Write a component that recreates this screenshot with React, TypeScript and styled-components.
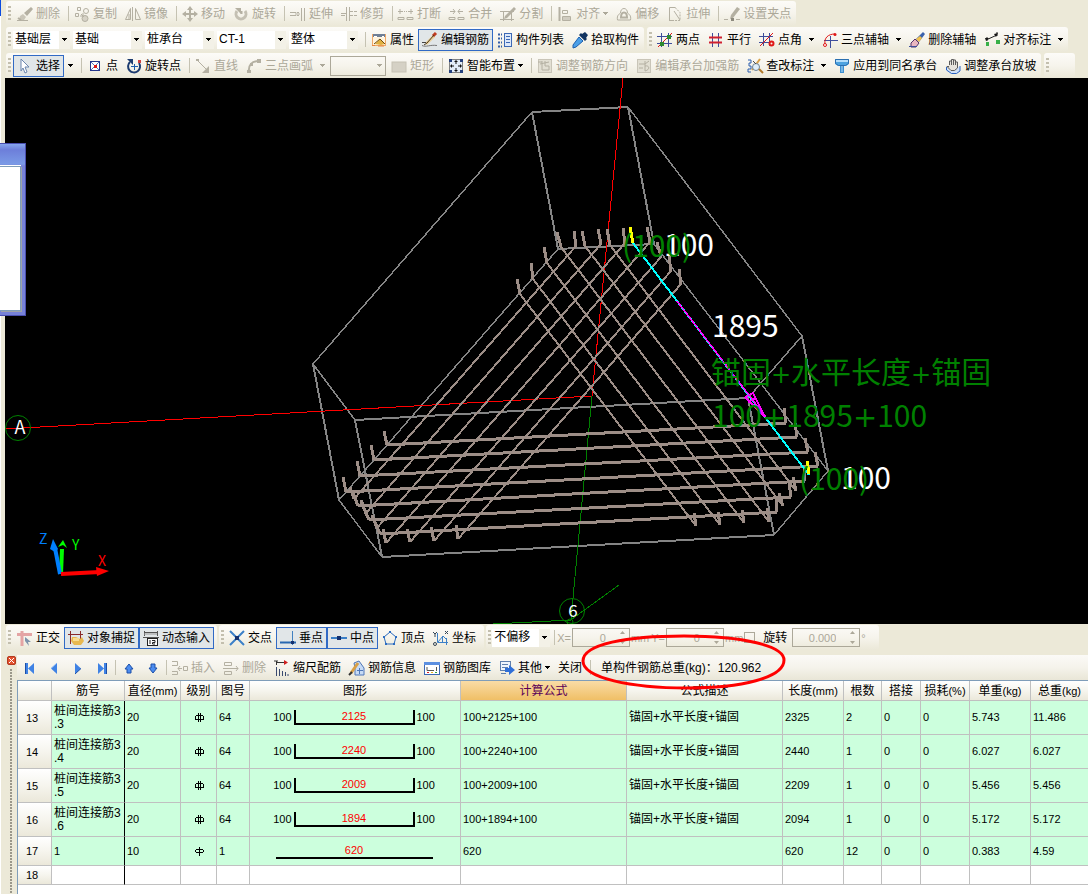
import React from 'react';
import styled, { createGlobalStyle, css } from 'styled-components';

const SANS = '"Liberation Sans", "Noto Sans CJK SC", sans-serif';
const CAD = '"Noto Sans CJK SC", "Noto Sans", sans-serif';
const G = '#b4b0a2';
const BLUE = '#1c4fa8';

const Global = createGlobalStyle`
  *, *::before, *::after { box-sizing: border-box; }
  body { margin: 0; background: #ece9d8; font-family: ${SANS}; font-size: 12px; line-height: 16px; color: #000; }
  button, input, select { font: inherit; color: inherit; margin: 0; }
`;

const Page = styled.div`
  position: relative;
  display: flex;
  flex-direction: column;
  min-height: 100vh;
  overflow: hidden;
  padding-left: 1px;
  background: linear-gradient(90deg, #fff 1px, #ece9d8 0);
`;

const Bars = styled.header`
  display: flex;
  flex-direction: column;
  gap: 1px;
  padding: 1px 0 0 5px;
`;

const BarRow = styled.div`
  display: flex;
  gap: 3px;
  white-space: nowrap;
`;

const Strip = styled.div<{ $tail?: number }>`
  display: flex;
  align-items: center;
  flex: none;
  height: 25px;
  padding: 0 ${p => p.$tail ?? 1}px 0 2px;
  border-radius: 3px;
  background: linear-gradient(#fcfbf8, #f6f4ec 50%, #ebe8d8);
`;

const Grip = styled.span<{ $gap?: number }>`
  flex: none;
  width: 3px;
  height: 15px;
  margin-right: ${p => p.$gap ?? 1}px;
  background: repeating-linear-gradient(#c3bfae 0 2px, transparent 2px 4px);
`;

const Sep = styled.span<{ $tight?: boolean }>`
  flex: none;
  width: 1px;
  height: 15px;
  margin: 0 1px 0 ${p => (p.$tight ? 1 : 4)}px;
  background: #c5c2b2;
`;

const ToolButton = styled.button<{ $on?: boolean }>`
  display: flex;
  align-items: center;
  flex: none;
  gap: 3px;
  height: 22px;
  padding: 0 3px;
  border: 1px solid transparent;
  background: transparent;
  white-space: nowrap;
  ${p => p.$on && css`
    border-color: #316ac5;
    background: #e1e6e8;
  `}
  &:disabled { color: #aca899; }
`;

const Glyph = styled.svg`
  display: block;
  flex: none;
  overflow: visible;
`;

const ArrowSvg = styled.svg<{ $split?: boolean }>`
  display: block;
  flex: none;
  margin-left: ${p => (p.$split ? 4 : 0)}px;
`;

const ArrowButton = styled.button`
  display: flex;
  align-items: center;
  flex: none;
  width: 13px;
  height: 22px;
  padding: 0 4px;
  border: 0;
  background: transparent;
`;

const ComboBox = styled.span<{ $w: number; $off?: boolean }>`
  display: grid;
  flex: none;
  align-items: center;
  width: ${p => p.$w}px;
  height: 18px;
  margin: 0 3px 0 0;
  background: ${p => (p.$off ? 'transparent' : 'linear-gradient(90deg, #fff calc(100% - 11px), #f3f1e7 0)')};
  ${p => p.$off && css`
    height: 20px;
    margin: 0 1px;
    border: 1px solid #aca899;
  `}
`;

const Select = styled.select`
  grid-area: 1 / 1;
  width: 100%;
  height: 100%;
  padding: 0 12px 2px 2px;
  border: 0;
  border-radius: 0;
  background: transparent;
  appearance: none;
  opacity: 1;
`;

const ComboArrow = styled.span`
  grid-area: 1 / 1;
  justify-self: end;
  padding-right: 3px;
  pointer-events: none;
`;

const SpinBox = styled.span<{ $w: number }>`
  display: flex;
  align-items: center;
  flex: none;
  width: ${p => p.$w}px;
  height: 19px;
  padding-right: 4px;
  border: 1px solid #aca899;
`;

const SpinInput = styled.input`
  flex: 1;
  width: 20px;
  height: 16px;
  padding: 0 14px 0 0;
  border: 0;
  background: transparent;
  color: #aca899;
  font-size: 11px;
  text-align: right;
`;

const Muted = styled.label`
  flex: none;
  padding: 0 1px;
  color: #aca899;
  font-size: 11px;
`;

const TickLabel = styled.label`
  display: flex;
  align-items: center;
  gap: 8px;
  padding-right: 5px;
`;

const Tick = styled.input`
  width: 11px;
  height: 11px;
  border: 1px solid #aca899;
  appearance: none;
`;

const CanvasArea = styled.main`
  height: 546px;
  margin-left: 4px;
  background: #000;
`;

const Scene = styled.svg`
  display: block;
  width: 100%;
  height: 100%;
`;

const FloatingWindow = styled.aside`
  position: absolute;
  left: 0;
  top: 143px;
  width: 26px;
  height: 173px;
  padding: 22px 4px 4px 0;
  border: 1px solid #4a4fb0;
  border-left: 0;
  background: linear-gradient(#86a6ee, #6d7fda 6px, #7a9ae6 20px, #7782d8 22px);
`;

const WindowBody = styled.div`
  height: 100%;
  border: 1px solid #7f9db9;
  border-left: 0;
  background: #fff;
  box-shadow: 1px 1px 0 #9fa3a8, 0 -1px 0 #fff;
`;

const LeftMark = styled.span`
  position: absolute;
  left: 0;
  top: 0;
  width: 1px;
  height: 16px;
  background: #0a4be0;
`;

const Lower = styled.section`
  position: relative;
  display: flex;
  flex: 1;
  flex-direction: column;
`;

const SnapRow = styled(BarRow)`
  gap: 2px;
  padding: 1px 0 5px 5px;
`;

const Panel = styled.div`
  display: flex;
  flex: 1;
`;

const Gutter = styled.div`
  display: flex;
  flex: none;
  flex-direction: column;
  align-items: center;
  gap: 4px;
  width: 16px;
`;

const CloseButton = styled.button`
  display: flex;
  align-self: flex-end;
  justify-content: center;
  align-items: center;
  width: 9px;
  height: 9px;
  margin: 1px 1px 0 0;
  padding: 0;
  border: 1px solid #b33a20;
  border-radius: 2px;
  background: #e2512f;
`;

const Dots = styled.span`
  flex: 1;
  width: 2px;
  margin-left: 4px;
  background: repeating-linear-gradient(#9a978a 0 2px, transparent 2px 3px);
`;

const PanelMain = styled.div`
  display: flex;
  flex: 1;
  flex-direction: column;
  min-width: 0;
`;

const PanelBar = styled.div`
  display: flex;
  align-items: center;
  height: 25px;
  padding-left: 1px;
  background: linear-gradient(#fbfaf7, #f5f3eb 50%, #e9e6d7);
  white-space: nowrap;
`;

const Total = styled.output`
  padding-left: 9px;
`;

const TableWrap = styled.div`
  flex: 1;
  border: solid #7f9db9;
  border-width: 1px 0 0 1px;
  background: #fff;
`;

const Table = styled.table`
  width: 100%;
  table-layout: fixed;
  border-collapse: separate;
  border-spacing: 0;
`;

const Row = styled.tr<{ $h: number }>`
  height: ${p => p.$h}px;
`;

const Head = styled.th<{ $active?: boolean }>`
  padding: 0;
  border: solid #c0c0c0;
  border-width: 0 1px 1px 0;
  background: ${p => (p.$active ? 'linear-gradient(#f9dca6, #f0bf66)' : 'linear-gradient(#fff, #f6f5ee 50%, #ebe8da)')};
  color: ${p => (p.$active ? '#5a0058' : '#000')};
  font-weight: normal;
  white-space: nowrap;
  &:last-child { border-right: 0; }
`;

const RowHead = styled(Head)`
  padding-right: 5px;
  font-size: 11px;
`;

const Unit = styled.span`
  font-size: 11px;
`;

const Cell = styled.td<{ $fill?: boolean; $text?: boolean; $dark?: boolean }>`
  padding: 0 0 0 2px;
  border: solid #c0c0c0;
  border-width: 0 1px 1px 0;
  ${p => p.$dark && css`border-right-color: #000;`}
  background: ${p => (p.$fill ? '#ccffdd' : '#fff')};
  font-size: ${p => (p.$text ? 12 : 11)}px;
  line-height: 13px;
  white-space: nowrap;
  &:last-child { border-right: 0; }
`;

const Shape = styled.div`
  display: flex;
  justify-content: center;
  align-items: center;
  gap: 2px;
  padding-right: 4px;
`;

const Hooked = styled.span`
  width: 121px;
  height: 15px;
  border: solid #000;
  border-width: 0 2px 2px 2px;
  color: #f00;
  text-align: center;
`;

const Straight = styled(Hooked)`
  width: 157px;
  border-width: 0 0 2px 0;
`;

const Mark = styled.svg`
  display: block;
  margin: 0 auto;
`;

const RedRing = styled.svg`
  position: absolute;
  left: 578px;
  top: 8px;
  pointer-events: none;
`;

const S = (d: string, c = G, w = 1) => <path d={d} stroke={c} strokeWidth={w} fill="none" />;
const F = (d: string, c = G) => <path d={d} fill={c} />;

const icons: Record<string, React.ReactNode> = {
  erase: <>{F('M14 1l2 2-6 7-3-3z')}{F('M6 8l3 3-2 3-5 0 1-4z', '#c9c5b8')}{S('M0 14.500h11')}{S('M1 12l3 2', G, 2)}</>,
  copy: <>{S('M3.500 1.500h3v3h-3zM1.500 7.500h3v3h-3z')}<circle cx="12" cy="5" r="2.500" fill="none" stroke={G} /><circle cx="11" cy="12.500" r="3" fill="#d6d2c6" stroke={G} />{S('M7 8l3 3M9 7v3H6')}</>,
  mirror: <>{S('M5.500 2.500v11h-5zM10.500 2.500v11h5z')}{S('M7.500 1v14', G, 1)}{S('M4 8v5')}</>,
  move: <>{S('M8 3v10M3 8h10', G, 2)}{F('M8 0l3 4H5zM8 16l3-4H5zM0 8l4-3v6zM16 8l-4-3v6z')}</>,
  rotate: <>{S('M4 5a5 5 0 1 0 8 0', '#c4c0b3', 3)}{F('M2 2h6v6z')}{S('M8.500 5v3', G, 2)}</>,
  extend: <>{S('M0 6.500h6v3H0M7 8h3', G)}{S('M11.500 2v13M14.500 2v13')}{F('M7 6h2v1H7zM7 9h2v1H7z')}</>,
  trim: <>{S('M5.500 1v14M8.500 1v14')}{S('M0 7.500h5M9 5.500h3M9 9.500h3M0 9.500h4')}{F('M13 5h3v1h-3zM13 9h3v1h-3z')}</>,
  cut: <>{S('M0 5.500h5M10 5.500h5M2 3v5M13 3v5')}{S('M0 11.500h6v2H0zM9 11.500h6v2H9z')}{F('M6 5h1v1H6zM8 5h1v1H8z')}</>,
  merge: <>{S('M1 5.500h5M9 5.500h5M4 3l2 2.500L4 8M11 3L9 5.500 11 8')}{S('M0 11.500h6v2H0zM9 11.500h6v2H9z')}</>,
  split: <>{S('M0 5.500h14M0 13.500h14M3.500 5v10M11.500 5v10')}{F('M14 1l2 2-9 9-3 1 1-3z')}</>,
  align: <>{S('M2.500 1v14', G, 2)}{S('M5.500 4.500h5v3h-5zM5.500 10.500h8v4h-8z')}{F('M6 11h7v3H6z', '#d0ccc0')}</>,
  offset: <>{S('M1.500 14h13c1-5-2-6-3-7 0-6-7-6-7 0-1 1-4 2-3 7z', G)}{S('M5 11.500h6c0-3-1-5-3-5s-3 2-3 5z', G, 2)}</>,
  stretch: <>{S('M2.500 14.500v-13h6M2 14.500h4')}{S('M7 5l6 9', G)}<path d="M8 1.500l5 5v8H6" fill="none" stroke={G} strokeDasharray="2 1" /></>,
  gripPoint: <>{F('M13 1l3 2-7 9-3 1 1-4z')}{S('M0 13.500h4M12 13.500h4')}{F('M7 12h3v3H7z', '#8d8a7e')}</>,
  prop: <><rect x="1.500" y="2.500" width="13" height="11" fill="#fff3dd" stroke="#f0a868" />{F('M2 2h12v3H2z', '#6f7f96')}{S('M3 4.500h3M11 4.500h2', '#fff')}{F('M4 12l5-5 5 5-4 1z', '#e0b040')}{S('M3 12l6-5 5 5', '#6e4e10')}{S('M1 13.500h3M7 14h6', '#e8863c')}</>,
  editBar: <>{S('M4 12l8-8', '#e8cf9a', 3)}{S('M11 4l3-3', '#c03b20', 3)}{S('M2 13l3-2 7-8', '#4a3a20')}{S('M0 13.500c4 2 8-1 15 0', '#777')}{S('M0 10.500h4', '#444')}</>,
  list: <>{S('M1 2.500h2M1 6.500h2M1 10.500h2M1 14.500h2M4 2.500h1M4 6.500h1M4 10.500h1M4 14.500h1', '#345fa8', 2)}<rect x="7.500" y="1.500" width="7" height="13" fill="#dce8fa" stroke="#3c68b4" />{S('M9 4.500h4M9 7.500h4M9 10.500h4', '#3c68b4')}</>,
  picker: <>{F('M10 2l3-2 3 3-2 3 1 1-2 2-6-6 2-2z', '#12335f')}{F('M7 5l4 4-7 6-3 1 0-3z', '#4ba0e8')}{S('M7 5l4 4-7 6-3 1 0-3z', '#1d5fae')}</>,
  twoPt: <>{S('M4.500 1v14M11.500 1v14M0 4.500h15M0 11.500h15', '#3d4d9c')}{S('M1 15L15 1', '#e01818')}{F('M3 10h4v4H3zM10 3h4v4h-4z', '#2f8a2f')}</>,
  parallel: <>{S('M4.500 1v14M10.500 1v14', '#3d4d9c')}{S('M1 5.500h13M1 10.500h13', '#d02030', 2)}</>,
  angle: <>{S('M4.500 1v13M10.500 1v13M0 4.500h14M0 10.500h10', '#3d4d9c')}{S('M1 14L14 1', '#e01818')}<circle cx="12.500" cy="11.500" r="2" fill="none" stroke="#e01818" strokeWidth="2" /></>,
  threePt: <>{S('M8.500 4v12M2 8.500h14', '#3d4d9c')}{S('M3 12C2 6 6 2 13 2', '#e01818')}<circle cx="3" cy="13" r="1.500" fill="#fff" stroke="#e01818" /><circle cx="13" cy="2.500" r="1.500" fill="#e01818" /></>,
  brush: <>{F('M14 0l2 2-6 8-3-3z', '#3b62ad')}{F('M11 4l2 2-3 4-3-3z', '#f0c050')}{F('M6 7l4 4-3 4-5 0 0-4z', '#e9b6c0')}{S('M6 7l4 4-3 4-5 0 0-4z', '#54306a')}{S('M0 14.500h8', '#3d4d9c')}</>,
  dim: <>{S('M2 8l11-5', '#222')}{F('M1 6l4 0-3 3zM10 2l4-1-2 4z', '#111')}{F('M2 10h3v4H2zM12 8h4v4h-4z', '#38b048')}{S('M13 0v4M3 5v4', '#222')}</>,
  cursor: <>{F('M4 1l8 8-4 0 2 5-2 1-2-5-2 3z', '#fff')}{S('M4 1l8 8-4 0 2 5-2 1-2-5-2 3z', '#6c86ae')}</>,
  point: <><rect x="3.500" y="3.500" width="9" height="9" fill="#fff" stroke="#26378c" />{S('M4 4l8 8M12 4l-8 8', '#5870c0')}{F('M7 7h3v3H7z', '#e01818')}</>,
  rotPt: <>{S('M4 4a6 6 0 1 0 9 1', '#1d3c70', 2)}{F('M1 1h6v6z', '#1d3c70')}{S('M8.500 6v6M5 8.500h7', '#1d5fae')}{F('M12 2h3v3h-3z', '#d04040')}</>,
  line: <>{S('M2 2l11 11', G)}{F('M14 8v7H7z')}{F('M1 1h3v2H1z')}</>,
  arc: <>{S('M3 14C2 7 6 3 13 3', G, 2)}{F('M1 12h4v3H1zM11 1h4v4h-4zM4 5h3v3H4z')}</>,
  rect: <><rect x="1" y="4" width="14" height="10" fill="#d5d1c5" stroke="#c6c2b4" /></>,
  smart: <><rect x="1.500" y="1.500" width="13" height="13" fill="#e3edf9" stroke="#111" strokeDasharray="1 1" />{S('M8 3v3M8 10v3M3 8h3M10 8h3', '#111')}{F('M8 2l2 2H6zM8 14l2-2H6zM2 8l2-2v4zM14 8l-2-2v4z', '#111')}{F('M1 1h3v3H1zM12 1h3v3h-3zM1 12h3v3H1zM12 12h3v3h-3z', '#24407c')}</>,
  dir: <><rect x="1.500" y="1.500" width="13" height="13" fill="#e2dfd3" stroke="#c9c5b8" />{S('M3 6l9-2M5 3v9h7v-4M8 3v5h4')}{S('M1 4h4')}</>,
  strong: <><rect x="1.500" y="1.500" width="13" height="13" fill="#e2dfd3" stroke="#c9c5b8" />{S('M3 6h6l4-3M9 3v10M9 8c5-1 5 4 0 5M3 10h4')}</>,
  inspect: <>{S('M1 2h3v3H2v3h2v3H1v3h3', '#2d5fae')}{S('M5 12L13 1', '#d8a048', 2)}<circle cx="9" cy="9" r="3.500" fill="#dfeefa" stroke="#6d8294" />{S('M12 11l4 4', '#b07828', 2)}{S('M6 3l3 3', '#4a4a4a')}</>,
  apply: <>{F('M1 1h14v5l-3 2H4L1 6z', '#4da3e0')}{F('M2 2h12v2H2z', '#b5defa')}{F('M6 7h4v8H6z', '#3c8fd0')}{S('M1.500 1.500h13v4l-3 2h-7l-3-2z', '#2b6fb0')}{S('M8 8v6', '#b5defa')}</>,
  slope: <>{F('M1 9h14v4l-4 3H6l-5-4z', '#cfe0f8')}{S('M1.500 9v3l5 3.500h5l3.500-2.500V8', '#2a62c0')}{F('M4 6V3h2v4V1h2v6V1h2v6V3h2v8l-3 2H5L1 8h3z', '#e6e3dc')}{S('M4.500 7V3h2V1.500h2V2h2v2h2v6l-3 2.500H6L2 8.500h2M6.500 3v4M8.500 2v5M10.500 3v4', '#5c5c5c')}</>,
  ortho: <>{S('M5 1v15M0 4.500h15', '#e4a4a4', 3)}{F('M8 7l6 5-3 0 1 4-4-5z', '#7e93ab')}</>,
  osnap: <>{S('M2.500 1v13M12.500 1v8', '#8a2a2a')}{S('M0 4.500h15', '#8a2a2a')}{F('M4 7l4 0 4 2 2-2 2 4-3 4-7 0-3-4z', '#e8b850')}{F('M5 8h6v3H5z', '#f8dc90')}</>,
  dyn: <>{S('M1 2.500h14M1.500 1v5M14.500 1v5M0 7.500h16', '#555')}<rect x="4.500" y="8.500" width="10" height="7" fill="#fff" stroke="#222" />{S('M7 10v4M9 10.500h3v2H9.500v1.500H12', '#222')}{S('M1 4h13', '#999')}</>,
  cross: <>{S('M1 1l14 14M15 1L1 15', '#3c80c8', 2)}{F('M6 6h4v4H6z', '#14306e')}</>,
  perp: <>{S('M12.500 1v14', '#4080c0')}{S('M0 12.500h16', '#2868b0', 2)}{F('M11 11h3v3h-3z', '#14306e')}</>,
  mid: <>{S('M0 8h16', '#3c80c8', 2)}{F('M6 6h4v4H6z', '#14306e')}</>,
  vertex: <>{S('M8 2l6 5-2 7H4L2 7z', '#2c6cc0', 1)}{F('M7 1h2v2H7zM1 6h2v2H1zM13 6h2v2h-2zM3 13h2v2H3zM11 13h2v2h-2z', '#2c6cc0')}</>,
  coord: <>{S('M4.500 3v9.500H15M5 12l5-6 3 3M9.500 6v6', '#3c80c8')}{S('M0 2l2 2 2-2M2 4v3M12 1l3 3M15 1l-3 3', '#345')}<circle cx="2" cy="14" r="1.500" fill="none" stroke="#345" />{S('M13.500 8v7', '#3c80c8')}</>,
  first: <>{F('M3 3h3v11H3zM12 3v11L6 8.500z', '#3f82e4')}{S('M3.500 3v11', BLUE)}</>,
  prev: <>{F('M11 3v11L5 8.500z', '#3f82e4')}{S('M11 3L5 8.500', '#7fb0f4')}</>,
  next: <>{F('M5 3v11l6-5.500z', '#3f82e4')}{S('M5 14l6-5.500', BLUE)}</>,
  last: <>{F('M10 3h3v11h-3zM4 3v11l6-5.500z', '#3f82e4')}{S('M12.500 3v11', BLUE)}</>,
  up: <>{F('M8 4l4 5h-2v4H6V9H4z', '#4b8cf0')}{S('M8 4l4 5h-2v4H6V9H4z', BLUE)}</>,
  down: <>{F('M8 13l4-5h-2V4H6v4H4z', '#4b8cf0')}{S('M8 13l4-5h-2V4H6v4H4z', BLUE)}</>,
  insert: <>{S('M0 1.500h5.500v4H0M0 11.500h5.500v3H0')}{S('M6 8.500h4M8 6L6 8.500 8 11M11.500 6.500h4v4h-4z')}</>,
  remove: <>{S('M1.500 2.500h7v3h-7zM1.500 11.500h7v3h-7z')}{S('M0 8.500h15M13 6l2 2.500-2 2.500')}</>,
  scale: <>{S('M2.500 1v4M3 2.500h10', '#333')}{F('M10 0v5l4-2.500z', '#d02020')}{S('M2.500 7v9M5.500 9v7M8.500 11v5M11.500 12v4M14 14v2', '#3a4a70')}{S('M0 1h4', '#333')}</>,
  info: <><path d="M5 3l5-2 5 7v7H6V8z" fill="#c7dbf5" stroke="#4f77b8" />{S('M2 13L9 3', '#d8a048', 3)}{S('M0 15l3-3', '#333', 2)}{S('M8 10.500h6M10.500 8v6', '#4f77b8')}</>,
  gallery: <><rect x="0.500" y="2.500" width="15" height="12" fill="#fff" stroke="#3c68b4" />{F('M0 2h16v3H0z', '#5c8fe0')}{S('M3 7v3.500h7M12.500 7v4', '#555')}{F('M3 12h2v1H3z', '#e02020')}{F('M7 12h2v1H7z', '#e8b020')}{F('M11 12h2v1h-2z', '#30a040')}</>,
  other: <><rect x="1.500" y="1.500" width="10" height="9" fill="#eef4fc" stroke="#5f7fae" />{S('M3 4.500h6M3 7.500h6M2 13.500h5', '#5f7fae')}{F('M6 8h4V5l6 5-6 5v-3H6z', '#2f6fd8')}</>,
};

const Icon = ({ name }: { name: string }) => (
  <Glyph width="16" height="16" viewBox="0 0 16 16" aria-hidden="true">{icons[name]}</Glyph>
);

const Arrow = ({ off, split }: { off?: boolean; split?: boolean }) => (
  <ArrowSvg $split={split} width="5" height="3" viewBox="0 0 5 3" shapeRendering="crispEdges" aria-hidden="true">
    <path d="M0 0h5L2.500 3z" fill={off ? '#aca899' : '#000'} />
  </ArrowSvg>
);

type ToolProps = { icon?: string; label?: string; title?: string; off?: boolean; on?: boolean; menu?: 'near' | 'split' };
const Tool = ({ icon, label, title, off, on, menu }: ToolProps) => (
  <ToolButton type="button" disabled={off} $on={on} aria-label={title} aria-pressed={on}>
    {icon && <Icon name={icon} />}
    {label}
    {menu && <Arrow off={off} split={menu === 'split'} />}
  </ToolButton>
);

const Combo = ({ value, label, w, off }: { value: string; label: string; w: number; off?: boolean }) => (
  <ComboBox $w={w} $off={off}>
    <Select aria-label={label} disabled={off}><option>{value}</option></Select>
    <ComboArrow><Arrow off={off} /></ComboArrow>
  </ComboBox>
);

const Spin = ({ id, value, w }: { id: string; value: string; w: number }) => (
  <SpinBox $w={w}>
    <SpinInput id={id} defaultValue={value} disabled />
    <svg width="5" height="13" viewBox="0 0 5 13" aria-hidden="true">
      <path d="M0 3h5L2.500 0zM0 10h5L2.500 13z" fill="#aca899" />
    </svg>
  </SpinBox>
);

type Line = [number, number, number, number];
type Bar = [number, number, number, number, number, number, number, number];

/* Each bar: hook tip, start, end, hook tip. */
const levelBars: Bar[] = [
  [384, 431, 387, 445, 786, 423, 784, 408],
  [371, 445, 374, 460, 797, 437, 795, 423],
  [357, 461, 360, 476, 808, 452, 805, 438],
  [343, 477, 346, 492, 818, 466, 815, 452],
  [352, 490, 358, 506, 805, 481, 804, 467],
  [361, 502, 369, 520, 791, 497, 789, 482],
  [373, 517, 380, 534, 777, 512, 776, 498],
];
const slantBars: Bar[] = [
  [574, 231, 576, 246, 354, 499, 350, 487],
  [598, 229, 601, 244, 366, 513, 361, 500],
  [623, 228, 625, 243, 377, 528, 372, 515],
  [647, 227, 650, 242, 386, 543, 383, 529],
  [657, 242, 661, 257, 410, 542, 407, 529],
  [669, 256, 671, 271, 434, 541, 431, 527],
  [679, 269, 681, 284, 458, 539, 456, 525],
  [517, 279, 520, 294, 696, 526, 694, 513],
  [531, 263, 533, 279, 720, 525, 718, 512],
  [544, 247, 547, 263, 744, 523, 742, 510],
  [557, 232, 561, 247, 769, 522, 767, 508],
  [582, 231, 585, 246, 783, 506, 779, 493],
  [607, 229, 610, 245, 796, 491, 793, 477],
];
const hooks = [...levelBars, ...slantBars].flatMap<Line>(b => [
  [b[0], b[1], b[2], b[3]],
  [b[4], b[5], b[6], b[7]],
]);
const path = (ls: Line[]) => ls.map(l => `M${l[0]} ${l[1]}L${l[2]} ${l[3]}`).join('');
const runs = (bs: Bar[]) => path(bs.map(b => [b[2], b[3], b[4], b[5]]));

const CadText = styled.text`
  font-family: ${CAD};
  font-size: 30px;
`;
const Plus = styled.tspan<{ $size: number }>`
  font-family: "DejaVu Sans", sans-serif;
  font-size: ${p => p.$size}px;
`;
const SmallText = styled.text<{ $size: number }>`
  font-family: ${CAD};
  font-size: ${p => p.$size}px;
`;

const Drawing = () => (
  <Scene role="img" aria-label="三维钢筋视图">
    <g transform="translate(-5 -78)">
      <g fill="none" shapeRendering="crispEdges">
        <path d="M628 107L802 336L748 398M532 112L313 364L355 420M558 249L339 500L382 557M774 535L828 471L654 244" stroke="#858585" strokeWidth="1.500" />
        <path d="M532 112L628 107M355 420L748 398M382 557L774 535M654 244L558 249M532 112L558 249M628 107L654 244M802 336L828 471M748 398L774 535M355 420L382 557M313 364L339 500" stroke="#858585" strokeWidth="2" />
        <path d="M623 78L592 396M5 429L592 396" stroke="#f00" />
        <path d="M592 396L573 598L571 620M572 619L619 585M493 624L571 620" stroke="#008000" />
        <path d={runs(levelBars)} stroke="#9d8e87" strokeWidth="3" />
        <path d={runs(slantBars)} stroke="#9d8e87" strokeWidth="2" />
        <path d={path(hooks)} stroke="#9d8e87" strokeWidth="3" />
        <path d="M633 243L809 475" stroke="#0ff" strokeWidth="2" />
        <path d="M677 301L765 416M745 397L765 417L753 393L745 397M748 402L756 398" stroke="#f0f" strokeWidth="1.500" />
        <path d="M630 227L633 243M807 461L809 474" stroke="#ff0" strokeWidth="3" />
      </g>
      <g fill="#fff">
        <CadText x="664" y="256">100</CadText>
        <CadText x="712" y="337">1895</CadText>
        <CadText x="841" y="489">100</CadText>
      </g>
      <g fill="#008000">
        <CadText x="622" y="257">(100)</CadText>
        <CadText x="711" y="383">锚固<Plus $size={24}>+</Plus>水平长度<Plus $size={24}>+</Plus>锚固</CadText>
        <CadText x="712" y="427">100<Plus $size={29}>+</Plus>1895<Plus $size={29}>+</Plus>100</CadText>
        <CadText x="799" y="490">(100)</CadText>
      </g>
      <g fill="none" stroke="#008000">
        <circle cx="18" cy="428" r="12.500" />
        <circle cx="572" cy="611" r="12.500" />
        <circle cx="570" cy="622" r="3" />
      </g>
      <g fill="#fff" textAnchor="middle">
        <SmallText $size={18} x="20" y="434">A</SmallText>
        <SmallText $size={17} x="573" y="617">6</SmallText>
      </g>
      <path d="M61 574L62 549" stroke="#0f0" strokeWidth="4" />
      <path d="M58 547L63 540L67 548L63 545Z" fill="#0f0" />
      <path d="M60 574L55 548" stroke="#0080ff" strokeWidth="4" />
      <path d="M53 539L58 549L55 552L50 549Z" fill="#0080ff" />
      <path d="M61 574L100 572" stroke="#f00" strokeWidth="4" />
      <path d="M96 567L109 571L97 576Z" fill="#f00" />
      <SmallText $size={14} x="39" y="544" fill="#0080ff">Z</SmallText>
      <SmallText $size={14} x="72" y="550" fill="#0f0">Y</SmallText>
      <SmallText $size={14} x="98" y="566" fill="#f00">X</SmallText>
    </g>
  </Scene>
);

const widths = [34, 73, 56, 36, 33, 211, 166, 156, 61, 38, 39, 49, 61];
const heads: [string, string?][] = [
  ['筋号'], ['直径', '(mm)'], ['级别'], ['图号'], ['图形'], ['计算公式'], ['公式描述'],
  ['长度', '(mm)'], ['根数'], ['搭接'], ['损耗', '(%)'], ['单重', '(kg)'], ['总重', '(kg)'],
];

type Rebar = { no: number; name: string[]; dia: string; plain?: boolean; fig: string; mid: string; formula: string; desc: string; rest: string[] };
const anchor = '锚固+水平长度+锚固';
const rebars: Rebar[] = [
  { no: 13, name: ['桩间连接筋3', '.3'], dia: '20', fig: '64', mid: '2125', formula: '100+2125+100', desc: anchor, rest: ['2325', '2', '0', '0', '5.743', '11.486'] },
  { no: 14, name: ['桩间连接筋3', '.4'], dia: '20', fig: '64', mid: '2240', formula: '100+2240+100', desc: anchor, rest: ['2440', '1', '0', '0', '6.027', '6.027'] },
  { no: 15, name: ['桩间连接筋3', '.5'], dia: '20', fig: '64', mid: '2009', formula: '100+2009+100', desc: anchor, rest: ['2209', '1', '0', '0', '5.456', '5.456'] },
  { no: 16, name: ['桩间连接筋3', '.6'], dia: '20', fig: '64', mid: '1894', formula: '100+1894+100', desc: anchor, rest: ['2094', '1', '0', '0', '5.172', '5.172'] },
  { no: 17, name: ['1'], dia: '10', plain: true, fig: '1', mid: '620', formula: '620', desc: '', rest: ['620', '12', '0', '0', '0.383', '4.59'] },
];

const Grade = ({ plain }: { plain?: boolean }) => (
  <Mark width="9" height="9" viewBox="0 0 9 9" shapeRendering="crispEdges" role="img" aria-label={plain ? '一级' : '三级'}>
    <path d={plain ? 'M1 2.500h7M1 5.500h7M0.500 3v2M8.500 3v2M4.500 0v9' : 'M1 2.500h7M0 6.500h9M0.500 3v3M8.500 3v3M3.500 0v9M5.500 0v9'} fill="none" stroke="#000" />
  </Mark>
);

const RebarTable = () => (
  <Table>
    <colgroup>{widths.map((w, i) => <col key={i} style={{ width: w }} />)}<col /></colgroup>
    <thead>
      <Row $h={20}>
        <Head aria-label="行号" />
        {heads.map(([t, u]) => <Head key={t} scope="col" $active={t === '计算公式'}>{t}{u && <Unit>{u}</Unit>}</Head>)}
      </Row>
    </thead>
    <tbody>
      {rebars.map(r => (
        <Row key={r.no} $h={r.plain ? 29 : 34}>
          <RowHead scope="row">{r.no}</RowHead>
          <Cell $fill $dark $text={!r.plain}>
            {r.name[0]}
            {r.name[1] && <><br />{r.name[1]}</>}
          </Cell>
          <Cell $fill>{r.dia}</Cell>
          <Cell $fill><Grade plain={r.plain} /></Cell>
          <Cell $fill>{r.fig}</Cell>
          <Cell $fill>
            <Shape>
              {r.plain ? <Straight>{r.mid}</Straight> : <>100<Hooked>{r.mid}</Hooked>100</>}
            </Shape>
          </Cell>
          <Cell $fill>{r.formula}</Cell>
          <Cell $fill $text>{r.desc}</Cell>
          {r.rest.map((v, i) => <Cell key={i} $fill>{v}</Cell>)}
        </Row>
      ))}
      <Row $h={19}>
        <RowHead scope="row">18</RowHead>
        {heads.map((h, i) => <Cell key={h[0]} $dark={i === 0} />)}
      </Row>
    </tbody>
  </Table>
);

export default function App() {
  return (
    <Page>
      <Global />
      <LeftMark />
      <Bars>
        <BarRow>
          <Strip role="toolbar">
            <Grip $gap={2} />
            <Tool off icon="erase" label="删除" /><Sep />
            <Tool off icon="copy" label="复制" />
            <Tool off icon="mirror" label="镜像" /><Sep />
            <Tool off icon="move" label="移动" />
            <Tool off icon="rotate" label="旋转" /><Sep />
            <Tool off icon="extend" label="延伸" />
            <Tool off icon="trim" label="修剪" /><Sep />
            <Tool off icon="cut" label="打断" />
            <Tool off icon="merge" label="合并" />
            <Tool off icon="split" label="分割" /><Sep />
            <Tool off icon="align" label="对齐" menu="near" />
            <Tool off icon="offset" label="偏移" />
            <Tool off icon="stretch" label="拉伸" /><Sep />
            <Tool off icon="gripPoint" label="设置夹点" />
          </Strip>
        </BarRow>
        <BarRow>
          <Strip role="toolbar">
            <Grip $gap={2} />
            <Combo label="楼层" value="基础层" w={57} />
            <Combo label="构件大类" value="基础" w={69} />
            <Combo label="构件类型" value="桩承台" w={69} />
            <Combo label="构件" value="CT-1" w={69} />
            <Combo label="单元" value="整体" w={69} />
            <Sep />
            <Tool icon="prop" label="属性" />
            <Tool on icon="editBar" label="编辑钢筋" />
            <Tool icon="list" label="构件列表" />
            <Tool icon="picker" label="拾取构件" />
          </Strip>
          <Strip role="toolbar">
            <Grip />
            <Tool icon="twoPt" label="两点" />
            <Tool icon="parallel" label="平行" />
            <Tool icon="angle" label="点角" menu="split" />
            <Tool icon="threePt" label="三点辅轴" menu="split" />
            <Tool icon="brush" label="删除辅轴" />
            <Tool icon="dim" label="对齐标注" menu="split" />
          </Strip>
        </BarRow>
        <BarRow>
          <Strip role="toolbar">
            <Grip $gap={2} />
            <Tool on icon="cursor" label="选择" />
            <ArrowButton type="button" aria-label="选择方式"><Arrow /></ArrowButton>
            <Sep />
            <Tool icon="point" label="点" />
            <Tool icon="rotPt" label="旋转点" /><Sep />
            <Tool off icon="line" label="直线" />
            <Tool off icon="arc" label="三点画弧" menu="split" />
            <Combo off label="半径" value="" w={56} />
            <Tool off icon="rect" label="矩形" /><Sep />
            <Tool icon="smart" label="智能布置" menu="near" /><Sep />
            <Tool off icon="dir" label="调整钢筋方向" />
            <Tool off icon="strong" label="编辑承台加强筋" />
            <Tool icon="inspect" label="查改标注" menu="split" />
            <Tool icon="apply" label="应用到同名承台" />
            <Tool icon="slope" label="调整承台放坡" />
          </Strip>
          <Strip $tail={25}><Grip /></Strip>
        </BarRow>
      </Bars>

      <CanvasArea><Drawing /></CanvasArea>
      <FloatingWindow><WindowBody /></FloatingWindow>

      <Lower>
        <SnapRow>
          <Strip role="toolbar" $tail={3}>
            <Grip $gap={2} />
            <Tool icon="ortho" label="正交" />
            <Tool on icon="osnap" label="对象捕捉" />
            <Tool on icon="dyn" label="动态输入" />
          </Strip>
          <Strip role="toolbar" $tail={4}>
            <Grip />
            <Tool icon="cross" label="交点" />
            <Tool on icon="perp" label="垂点" />
            <Tool on icon="mid" label="中点" />
            <Tool icon="vertex" label="顶点" />
            <Tool icon="coord" label="坐标" />
          </Strip>
          <Strip role="toolbar" $tail={12}>
            <Grip />
            <Combo label="偏移方式" value="不偏移" w={58} />
            <Sep $tight />
            <Muted htmlFor="dx">X=</Muted>
            <Spin id="dx" value="0" w={58} />
            <Muted as="span">mm</Muted>
            <Muted htmlFor="dy">Y=</Muted>
            <Spin id="dy" value="0" w={58} />
            <Muted as="span">mm</Muted>
            <TickLabel><Tick type="checkbox" disabled />旋转</TickLabel>
            <Spin id="rot" value="0.000" w={68} />
            <Muted htmlFor="rot">°</Muted>
          </Strip>
        </SnapRow>
        <Panel>
          <Gutter>
            <CloseButton type="button" aria-label="关闭面板">
              <svg width="5" height="5" viewBox="0 0 5 5"><path d="M0 0l5 5M5 0L0 5" stroke="#fff" /></svg>
            </CloseButton>
            <Dots />
          </Gutter>
          <PanelMain>
            <PanelBar role="toolbar">
              <Tool icon="first" title="首行" />
              <Tool icon="prev" title="上一行" />
              <Tool icon="next" title="下一行" />
              <Tool icon="last" title="末行" />
              <Sep $tight />
              <Tool icon="up" title="上移" />
              <Tool icon="down" title="下移" />
              <Sep $tight />
              <Tool off icon="insert" label="插入" />
              <Tool off icon="remove" label="删除" />
              <Tool icon="scale" label="缩尺配筋" />
              <Tool icon="info" label="钢筋信息" />
              <Tool icon="gallery" label="钢筋图库" />
              <Tool icon="other" label="其他" menu="near" />
              <Tool label="关闭" />
              <Sep />
              <Total>单构件钢筋总重(kg)：120.962</Total>
            </PanelBar>
            <TableWrap><RebarTable /></TableWrap>
          </PanelMain>
        </Panel>
        <RedRing width="212" height="60" viewBox="0 0 212 60" aria-hidden="true">
          <path d="M4 29C4 12 48 4 105 4C165 4 205 14 205 28C205 46 162 56 108 56C52 56 4 46 4 29Z" fill="none" stroke="#f00" strokeWidth="3" />
        </RedRing>
      </Lower>
    </Page>
  );
}
